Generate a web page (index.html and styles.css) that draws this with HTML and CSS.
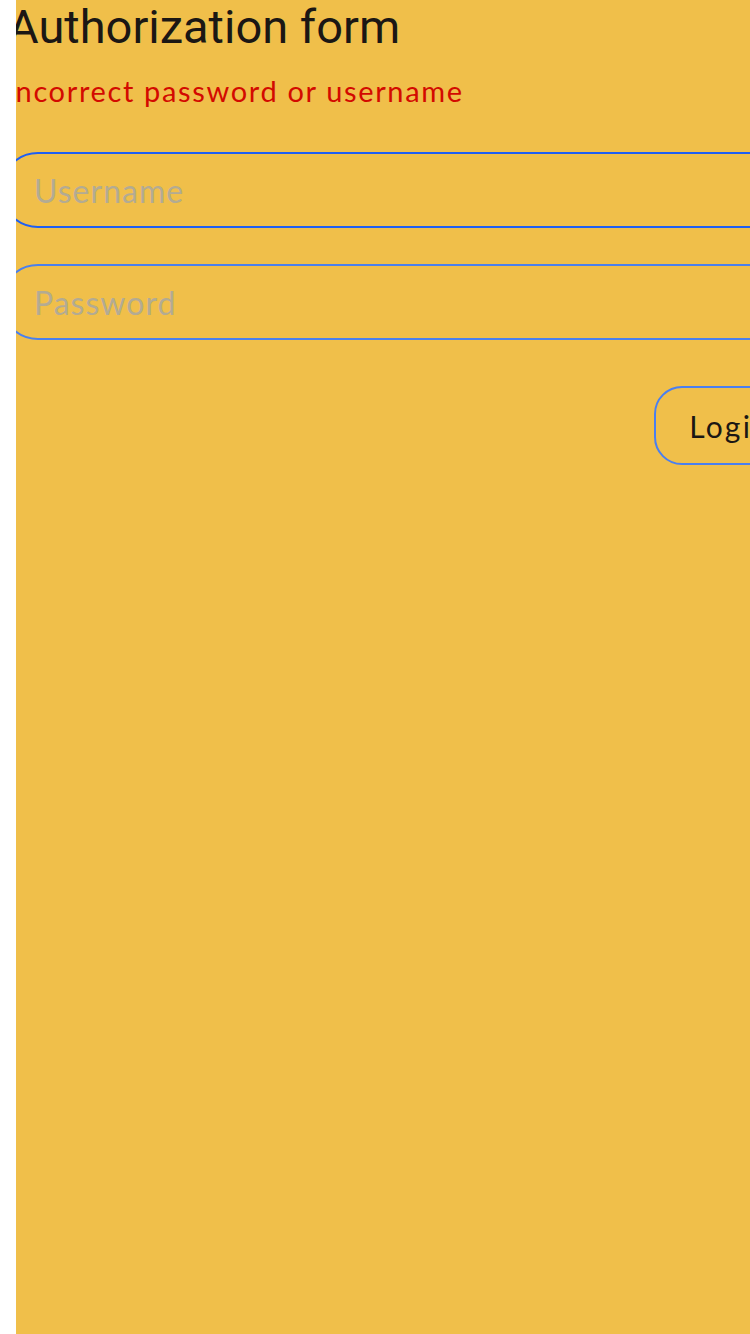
FILE: index.html
```html
<!DOCTYPE html>
<html lang="en">
<head>
<meta charset="utf-8">
<title>Authorization form</title>
<link rel="stylesheet" href="styles.css">
</head>
<body>
<div class="frame">
  <form class="form">
    <h1 class="title">Authorization form</h1>
    <p class="error">Incorrect password or username</p>
    <input class="field field-user" type="text" placeholder="Username">
    <input class="field field-pass" type="password" placeholder="Password">
    <div class="actions">
      <button class="login" type="button">Login</button>
    </div>
  </form>
</div>
</body>
</html>
```
FILE: styles.css
```css
html, body {
  margin: 0;
  padding: 0;
  background: #ffffff;
}

.frame {
  margin-left: 16px;
  height: 1334px;
  background: #f0bf4a;
  overflow: hidden;
}

.form {
  margin: 0 0 0 -16px;
  width: 806px;
  display: flex;
  flex-direction: column;
}

.title {
  margin: -1px 0 0 0;
  padding-left: 8px;
  font-family: Roboto, "Liberation Sans", sans-serif;
  font-weight: 400;
  font-size: 47px;
  line-height: 56px;
  color: #1b1714;
}

.error {
  margin: 19px 0 0 0;
  padding-left: 6px;
  font-family: Lato, "Noto Sans", sans-serif;
  font-size: 29px;
  letter-spacing: 1.65px;
  line-height: 34px;
  color: #d30a00;
}

.field {
  box-sizing: border-box;
  width: 100%;
  height: 76px;
  margin: 44px 0 0 0;
  padding: 0 33px 0 32px;
  border: 2px solid #1f5ff2;
  border-radius: 38px;
  background: transparent;
  font-family: Lato, "Noto Sans", sans-serif;
  font-size: 32px;
  letter-spacing: 1px;
  color: #1b1714;
  outline: none;
}

.field-pass {
  margin-top: 36px;
  border-color: #4a80ee;
}

.field::placeholder {
  color: #b3ab93;
}

.actions {
  display: flex;
  justify-content: flex-end;
  margin-top: 46px;
}

.login {
  box-sizing: border-box;
  height: 79px;
  padding: 0 33px 0 33px;
  border: 2px solid #4a7ff0;
  border-radius: 28px;
  background: transparent;
  font-family: Lato, "Noto Sans", sans-serif;
  font-size: 30px;
  letter-spacing: 2.2px;
  color: #1b1714;
}
```
